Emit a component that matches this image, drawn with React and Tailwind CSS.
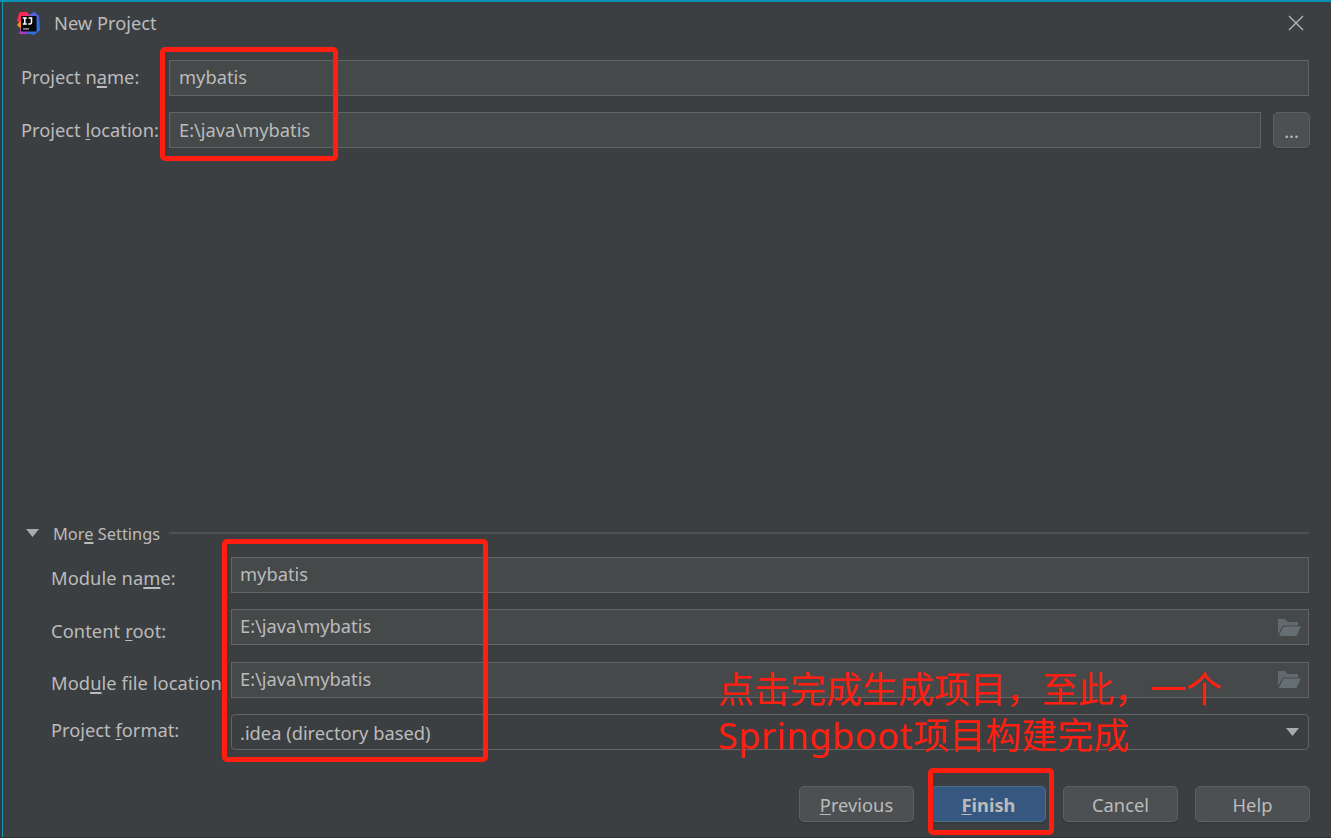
import clsx from 'clsx';

const Key = ({ children, thin }) => (
  <span className={clsx('underline underline-offset-[2px] [text-decoration-skip-ink:none]', thin ? 'decoration-1' : 'decoration-2')}>{children}</span>
);

const Logo = () => (
  <svg className="w-[23px] h-[23px]" viewBox="0 0 23 23">
    <polygon points="2,1 4,0 10,0 14,5 6,13 0,9" fill="#f9295a" />
    <polygon points="0,13 3,9 6,12 4,17" fill="#f98a22" />
    <polygon points="4,15 13,17 10,22 2,22" fill="#b23ac0" />
    <polygon points="12,3 17,0 22,4 23,18 17,23 9,21 16,12" fill="#2f6fe4" />
    <polygon points="11,4 14,2 17,0 22,4 22,9 18,7" fill="#5361dd" />
    <rect x="4" y="4" width="15.5" height="15.5" fill="#090909" />
    <path d="M5.8 6h4M7.8 6v6M5.8 12h4M11.5 6h3v4.6q0 1.4-1.4 1.4h-1.8" fill="none" stroke="#fff" strokeWidth="1.5" />
    <rect x="6" y="16.3" width="6" height="1.2" fill="#bbb" />
  </svg>
);

const Folder = () => (
  <svg className="w-[23px] h-[17px]" viewBox="0 0 23 17">
    <path d="M0 0H7L9.5 3H20V6.5H5L0 15Z" fill="#626a6e" />
    <path d="M5.5 7.5H23L18.5 17H0.8Z" fill="#656e73" />
  </svg>
);

const Arrow = () => (
  <svg className="w-[13px] h-[8px]" viewBox="0 0 13 8">
    <path d="M0 0H13L6.5 8Z" fill="#a7acae" />
  </svg>
);

const Field = ({ children, icon, className }) => (
  <div className={clsx('flex h-9 items-center justify-between border border-[#646464] bg-[#45494a]', className)}>
    <span className="-mt-[2px]">{children}</span>
    {icon}
  </div>
);

const Button = ({ children, primary }) => (
  <button
    className={clsx(
      'flex h-9 w-[115px] items-center justify-center rounded-[5px] border pt-[2px] shadow-[0_2px_1px_#37393b]',
      primary ? 'border-[#4c708c] bg-[#365880] font-bold' : 'border-[#5e6060] bg-[#4c5052]'
    )}
  >
    {children}
  </button>
);

const modules = [
  { label: <>Module na<Key>m</Key>e:</>, value: 'mybatis' },
  { label: <>Content <Key thin>r</Key>oot:</>, value: 'E:\\java\\mybatis', folder: true },
  { label: <>Mod<Key>u</Key>le file location:</>, value: 'E:\\java\\mybatis', folder: true },
];

export default function App() {
  return (
    <div className="relative h-[838px] w-[1331px] overflow-hidden border-t-2 border-b border-t-[#0891b2] border-b-[#2f3134] bg-[#3c3f41] font-['Noto_Sans','Noto_Sans_CJK_SC',sans-serif] text-[18.3px] leading-6 whitespace-nowrap text-[#bbbbbb]">
      <div className="flex h-full flex-col border-l-2 border-[#35383a]">
        <div className="flex grow flex-col border-l border-[#1298b4] pr-[22px] pl-[18px]">
          <header className="-ml-[4px] flex h-[42px] items-center">
            <Logo />
            <span className="ml-[14px]">New Project</span>
            <svg className="mr-[5px] ml-auto size-4" viewBox="0 0 16 16" stroke="#b4b6b7" strokeWidth="1.4">
              <path d="M1 1L15 15M15 1L1 15" />
            </svg>
          </header>

          <div className="mt-4 flex">
            <span className="w-[148px] pt-[5px]">Project n<Key>a</Key>me:</span>
            <Field className="grow pl-[9px]">mybatis</Field>
          </div>
          <div className="mt-[16px] flex">
            <span className="w-[148px] pt-[6px]">Project <Key thin>l</Key>ocation:</span>
            <Field className="grow pt-px pl-[9px]">E:\java\mybatis</Field>
            <button className="-mr-px ml-3 h-9 w-[37px] rounded-[5px] border border-[#5e6060] bg-[#4c5052] pt-px shadow-[0_2px_1px_#37393b]">...</button>
          </div>

          <div className="mt-[373px] flex h-6 items-center pl-[5px] text-[16.4px]">
            <Arrow />
            <span className="mt-px ml-[14px]">Mor<Key>e</Key> Settings</span>
            <div className="ml-[9px] h-[2px] grow bg-[#515151]" />
          </div>

          <div className="mt-[11.5px] flex flex-col gap-[16.5px] pl-[30px]">
            {modules.map((m, i) => (
              <div key={i} className="flex">
                <span className="w-[180px] pt-[9.5px] tracking-[0.08px]">{m.label}</span>
                <Field className="grow pl-2" icon={m.folder && <span className="mr-[7px]"><Folder /></span>}>{m.value}</Field>
              </div>
            ))}
            <div className="flex">
              <span className="w-[180px] pt-1">Project <Key thin>f</Key>ormat:</span>
              <div className="flex h-9 grow items-center justify-between rounded-[4px] border border-[#646464] pr-[9px] pl-2">
                <span className="pt-[2px]">.idea (directory based)</span>
                <Arrow />
              </div>
            </div>
          </div>

          <footer className="mt-[35.5px] -mr-px flex justify-end gap-[17px]">
            <Button><Key thin>P</Key>revious</Button>
            <Button primary><Key thin>F</Key>inish</Button>
            <Button>Cancel</Button>
            <Button>Help</Button>
          </footer>
        </div>
      </div>

      {/* red annotations on top of the dialog */}
      <div className="absolute top-[45px] left-[160px] h-[114px] w-[178px] rounded-[5px] border-[5px] border-[#ff1e10]" />
      <div className="absolute top-[537px] left-[222px] h-[223px] w-[266px] rounded-[5px] border-[5px] border-[#ff1e10]" />
      <div className="absolute top-[766px] left-[928px] h-[67px] w-[126px] rounded-[5px] border-[5px] border-[#ff1e10]" />
      <div className="absolute top-[665px] left-[718px] text-[36px] leading-[46px] text-[#ff1e10]">
        <p>点击完成生成项目，至此，一个</p>
        <p><span className="tracking-[0.6px]">Springboot</span>项目构建完成</p>
      </div>
    </div>
  );
}
